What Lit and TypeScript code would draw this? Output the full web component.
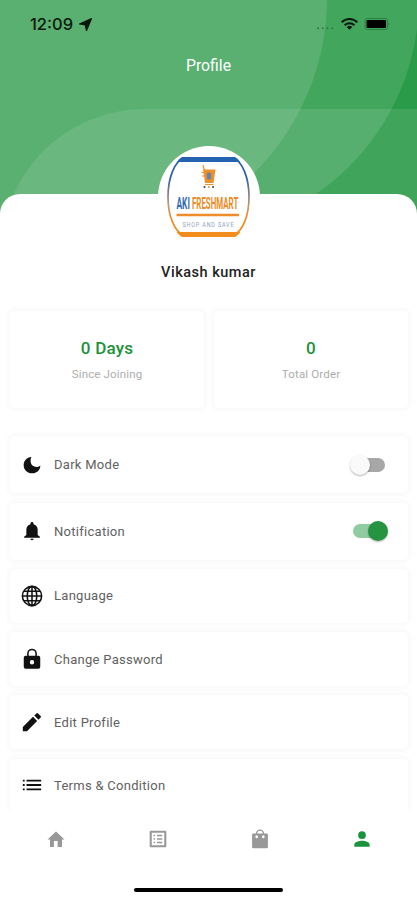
import { LitElement, html, css, svg } from "lit";
import { customElement } from "lit/decorators.js";
import { classMap } from "lit/directives/class-map.js";

const icon = (body: unknown, name: string) =>
  html`<svg class=${"icon " + name} viewBox="0 0 24 24">${body}</svg>`;

const moon = svg`<path d="M11.300 2.500C6 3 2 7 2 12.200C2 17.700 6.500 22 12.200 22C17.600 22 22 18 22 12.500C19 15 15.500 14.800 13 13C10 10.800 9.600 6 11.300 2.500Z"/>`;
const bell = svg`<path d="M12 23c1.100 0 2-.7 2-1.600h-4c0 .9.900 1.600 2 1.600zm6.800-6.200V10.500c0-3.200-1.900-5.800-5-6.500V3c0-1-.8-1.700-1.800-1.700s-1.800.7-1.800 1.700v1C7.100 4.700 5.200 7.300 5.200 10.500v6.300L2.500 19v1.200h19V19z"/>`;
const globe = svg`<g fill="none" stroke="currentColor" stroke-width="1.700"><circle cx="12" cy="12" r="10.500"/><ellipse cx="12" cy="12" rx="5.200" ry="10.500"/><path d="M12 1.500v21M1.500 12h21M3.200 6.800h17.600M3.200 17.200h17.600"/></g>`;
const lock = svg`<path fill-rule="evenodd" d="M19 8.500H17.300V6a5.300 5.300 0 0 0-10.600 0V8.500H5A2 2 0 0 0 3 10.500v10a2 2 0 0 0 2 2h14a2 2 0 0 0 2-2V10.500a2 2 0 0 0-2-2zM8.400 8.500V6a3.600 3.600 0 0 1 7.200 0V8.500zM12 13.200a2.400 2.400 0 1 1 0 4.800 2.400 2.400 0 0 1 0-4.800z"/>`;
const pencil = svg`<path d="M2 17.500v4.500h4.500L17.600 10.900l-4.500-4.500zM21.400 7.200a1.300 1.300 0 0 0 0-1.800l-2.800-2.800a1.300 1.300 0 0 0-1.800 0l-2.300 2.300 4.600 4.600z"/>`;
const list = svg`<path d="M2 11h2v2H2zM2 15.700h2v2H2zM2 6.300h2v2H2zM6 11h16v2H6zM6 15.700h16v2H6zM6 6.300h16v2H6z"/>`;
const home = svg`<path d="M9.500 21.500v-7h4.500v7h5.200v-9h3L12 3 1.800 12.500h3v9z"/>`;
const sheet = svg`<path fill-rule="evenodd" d="M3.500 2h17A1.500 1.500 0 0 1 22 3.500v17a1.500 1.500 0 0 1-1.500 1.500h-17A1.500 1.500 0 0 1 2 20.500v-17A1.500 1.500 0 0 1 3.500 2zM4.500 4.500v15h15v-15zM6.700 7h1.800v1.700H6.700zM10.700 7h6.500v1.700h-6.500zM6.700 11.200h1.800v1.700H6.700zM10.700 11.200h6.500v1.700h-6.500zM6.700 15.400h1.800v1.700H6.700zM10.700 15.400h6.500v1.700h-6.500z"/>`;
const bag = svg`<path fill-rule="evenodd" d="M20 5.500h-3a5 5 0 0 0-10 0H4a1.500 1.500 0 0 0-1.500 1.500v14.500A1.500 1.500 0 0 0 4 23h16a1.500 1.500 0 0 0 1.500-1.500V7A1.500 1.500 0 0 0 20 5.500zM12 2.200a3.300 3.300 0 0 1 3.300 3.300H8.700A3.300 3.300 0 0 1 12 2.200zM8 7.500a1.600 1.800 0 1 1 0 3.600 1.600 1.800 0 0 1 0-3.600zM16 7.500a1.600 1.800 0 1 1 0 3.600 1.600 1.800 0 0 1 0-3.600z"/>`;
const person = svg`<path d="M12 12a4.600 4.600 0 1 0 0-9.200A4.600 4.600 0 0 0 12 12zM12 14c-3.200 0-9.200 1.400-9.200 4.600v2.600h18.400v-2.600c0-3.200-6-4.600-9.200-4.600z"/>`;

const rows = [
  { label: "Dark Mode", glyph: moon, name: "moon", toggle: "off" },
  { label: "Notification", glyph: bell, name: "bell", toggle: "on" },
  { label: "Language", glyph: globe, name: "globe", toggle: "" },
  { label: "Change Password", glyph: lock, name: "lock", toggle: "" },
  { label: "Edit Profile", glyph: pencil, name: "pencil", toggle: "" },
  { label: "Terms & Condition", glyph: list, name: "list", toggle: "" },
];

@customElement("app-root")
export class AppRoot extends LitElement {
  static styles = css`
    :host { display: block; height: 900px; overflow: hidden; font-family: Roboto, "Liberation Sans", sans-serif; }
    * { box-sizing: border-box; }
    svg { display: block; flex: none; }
    .screen { display: flex; flex-direction: column; width: 417px; height: 900px; background: #fff; position: relative; isolation: isolate; overflow: hidden; }
    .backdrop { position: absolute; z-index: -1; top: 0; left: 0; width: 417px; height: 230px; }
    .status { height: 48px; flex: none; display: flex; align-items: center; padding: 0 26px 0 30px; }
    .clock { font: 500 16.500px/20px Inter, sans-serif; color: #07190c; width: 46px; white-space: nowrap; }
    .loc { width: 15px; height: 15px; margin-left: 2px; }
    .signals { width: 78px; height: 20px; margin-left: auto; }
    .title { height: 146px; flex: none; text-align: center; color: #fff; font-size: 15.800px; line-height: 35px; }
    .sheet { flex: 1; min-height: 0; background: #fff; border-radius: 20px 20px 0 0; display: flex; flex-direction: column; }
    .avatar { width: 102px; height: 102px; margin: -48px auto 0; border-radius: 50%; background: #fff; flex: none; }
    .name { text-align: center; font-weight: 500; font-size: 14.500px; line-height: 20px; letter-spacing: .5px; color: #222; margin-top: 15px; flex: none; }
    .stats { display: grid; grid-template-columns: 194px 194px; gap: 10px; padding: 0 10px; margin-top: 28px; flex: none; }
    .card { background: #fff; border-radius: 5px; box-shadow: 0 0 4px 3px rgba(0,0,0,.022); }
    .stat { height: 97px; display: flex; flex-direction: column; align-items: center; padding-top: 27px; }
    .value { font-size: 17px; font-weight: 500; line-height: 20px; color: #1d923b; letter-spacing: .2px; }
    .caption { font-size: 11.500px; line-height: 16px; margin-top: 8px; color: #adadad; letter-spacing: .15px; }
    .menu { display: flex; flex-direction: column; gap: 9.500px; padding: 28px 9px 0 10px; flex: 1; min-height: 0; overflow: hidden; }
    .row { height: 53.700px; flex: none; display: flex; align-items: center; padding: 0 20px 0 11px; color: #111; }
    .row.tall { height: 57px; }
    .icon { width: 22px; height: 22px; fill: currentColor; }
    .row .moon, .row .bell, .tab .icon { width: 20px; height: 20px; margin: 1px; }
    .label { margin-left: 11px; font-size: 13px; letter-spacing: .28px; color: #616161; }
    .moon + .label, .bell + .label { margin-left: 11px; }
    .toggle { width: 36px; height: 22px; display: flex; align-items: center; margin-left: auto; position: relative; }
    .track { width: 31px; height: 14px; margin-left: 2px; border-radius: 7px; background: #a7a7a7; }
    .knob { position: absolute; width: 20px; height: 20px; top: 1px; left: -2px; border-radius: 50%; background: #fafafa; box-shadow: 0 1px 2px rgba(0,0,0,.3); }
    .on .track { margin-left: 1px; background: #91cca0; }
    .on .knob { left: 16px; background: #249441; }
    .nav { height: 89px; flex: none; background: #fff; display: flex; flex-direction: column; align-items: center; }
    .tabs { display: grid; grid-template-columns: repeat(4, 102px); width: 408px; height: 56px; justify-items: center; align-items: center; color: #989898; }
    .tab.active { color: #1a933c; }
    .indicator { width: 149px; height: 4.500px; border-radius: 3px; background: #000; margin-top: 20.500px; }
  `;

  render() {
    return html`<div class="screen">
      <svg class="backdrop" viewBox="0 0 417 230">
        <rect width="417" height="230" fill="#2a9b48"/>
        <g fill="#fff" fill-opacity=".117">
          <path d="M0 0H419A238 238 0 0 1 181 236H0Z"/>
          <path d="M0 0H327A246 246 0 0 1 81 244H0Z"/>
          <path d="M417 109H145A144 144 0 0 0 1 253H417Z" fill-opacity=".105"/>
        </g>
      </svg>
      <div class="status">
        <span class="clock">12:09</span>
        <svg class="loc" viewBox="0 0 15 15"><path d="M13.500 1.500 8.500 13.500 7.300 8 1.500 7Z" fill="#07190c" stroke="#07190c" stroke-width="1.200" stroke-linejoin="round"/></svg>
        <svg class="signals" viewBox="0 0 78 20">
          <g fill="#2f7a44"><circle cx="5" cy="14.300" r="1"/><circle cx="9.700" cy="14.300" r="1"/><circle cx="14.400" cy="14.300" r="1"/><circle cx="19.100" cy="14.300" r="1"/></g>
          <g fill="none" stroke="#07190c" stroke-width="2"><path d="M28.700 8.300a11 11 0 0 1 15.600 0M31.600 11.300a7 7 0 0 1 9.800 0"/></g>
          <path d="M36.500 15.800 33.700 13a4 4 0 0 1 5.600 0z" fill="#07190c"/>
          <rect x="52" y="4.500" width="22.500" height="11" rx="2.500" fill="none" stroke="#2b7d41"/>
          <rect x="53.500" y="6" width="19.500" height="8" rx="1" fill="#000"/>
          <path d="M75.700 8v4q1.800-2 0-4z" fill="#2b7d41"/>
        </svg>
      </div>
      <div class="title">Profile</div>
      <div class="sheet">
        <svg class="avatar" viewBox="0 0 102 102">
          <defs><linearGradient id="rim" x2="0" y2="1"><stop offset=".25" stop-color="#285fae"/><stop offset=".62" stop-color="#c79870"/><stop offset=".8" stop-color="#ef8a1d"/></linearGradient></defs>
          <path d="M26 12H75C84 15 91 31 91 51S84 86 75 89.500H26C17 86 10 71 10 51S17 15 26 12Z" fill="#fff" stroke="url(#rim)" stroke-width="1.700"/>
          <path d="M24 11H77Q80 12.500 82 16H19Q21 12.500 24 11Z" fill="#2363b2"/>
          <path d="M18.500 86H82.500Q80 89.500 77 91H24Q21 89.500 18.500 86Z" fill="#f28c1c"/>
          <path d="M45 23.500H57.500L55.500 37H47L45.500 26" fill="#f09028"/>
          <path d="M45 19 46.500 24.500M43.500 26.500h4M44 30h4M47 38.500h8.500" stroke="#f09028" stroke-width="1.200" fill="none"/>
          <rect x="48.800" y="26.500" width="4.500" height="7" rx="1.500" fill="#6b83a6"/>
          <g fill="#444c66"><circle cx="46.500" cy="41" r="1.100"/><circle cx="55" cy="41" r="1.100"/></g><circle cx="50.800" cy="41" r="1" fill="#e6913f"/>
          <g font-family="Roboto, sans-serif" font-weight="700" font-size="17">
            <text transform="translate(18.500 62.500) scale(.49 1)" fill="#3269b2">AKI</text>
            <text transform="translate(34 62.500) scale(.465 1)" fill="#ed8b27">FRESHMART</text>
          </g>
          <path d="M18.500 69H81" stroke="#ef8d2a" stroke-width="2.400"/>
          <text transform="translate(24.500 80.500) scale(.78 1)" font-family="Roboto, sans-serif" font-size="7" letter-spacing="1.050" fill="#8da2bd">SHOP AND SAVE</text>
        </svg>
        <div class="name">Vikash kumar</div>
        <div class="stats">
          <div class="card stat"><div class="value">0 Days</div><div class="caption">Since Joining</div></div>
          <div class="card stat"><div class="value">0</div><div class="caption">Total Order</div></div>
        </div>
        <div class="menu">
          ${rows.map((r) => html`<div class=${classMap({ card: true, row: true, tall: !!r.toggle })}>
            ${icon(r.glyph, r.name)}<span class="label">${r.label}</span>
            ${r.toggle ? html`<div class=${classMap({ toggle: true, on: r.toggle === "on" })}><div class="track"></div><div class="knob"></div></div>` : ""}
          </div>`)}
        </div>
      </div>
      <div class="nav">
        <div class="tabs">
          <div class="tab">${icon(home, "home")}</div>
          <div class="tab">${icon(sheet, "orders")}</div>
          <div class="tab">${icon(bag, "bag")}</div>
          <div class="tab active">${icon(person, "person")}</div>
        </div>
        <div class="indicator"></div>
      </div>
    </div>`;
  }
}
